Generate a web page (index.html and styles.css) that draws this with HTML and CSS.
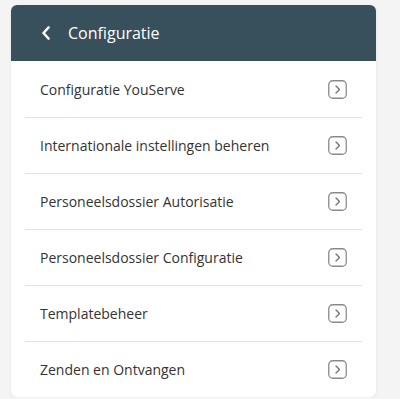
FILE: index.html
```html
<!DOCTYPE html>
<html lang="nl">
<head>
  <title>Configuratie</title>
  <meta charset="UTF-8">
  <link rel="stylesheet" href="styles.css">
</head>
<body>
<div class="card">
  <div class="card-header">
    <svg class="back" width="10" height="14" viewBox="0 0 10 14">
      <path d="M7.5 1.5 L2.5 7 L7.5 12.5" fill="none" stroke="#fff" stroke-width="2.6" stroke-linecap="round" stroke-linejoin="round"/>
    </svg>
    <span class="title">Configuratie</span>
  </div>
  <ul class="menu">
    <li class="menu-item"><span>Configuratie YouServe</span><svg class="go" width="19" height="19" viewBox="0 0 19 19"><rect x="0.75" y="0.75" width="17.5" height="17.5" rx="4" fill="none" stroke="#8a8a8a" stroke-width="1.3"/><path d="M8 6 L11.5 9.5 L8 13" fill="none" stroke="#6f6f6f" stroke-width="1.3" stroke-linecap="round" stroke-linejoin="round"/></svg></li>
    <li class="menu-item"><span>Internationale instellingen beheren</span><svg class="go" width="19" height="19" viewBox="0 0 19 19"><rect x="0.75" y="0.75" width="17.5" height="17.5" rx="4" fill="none" stroke="#8a8a8a" stroke-width="1.3"/><path d="M8 6 L11.5 9.5 L8 13" fill="none" stroke="#6f6f6f" stroke-width="1.3" stroke-linecap="round" stroke-linejoin="round"/></svg></li>
    <li class="menu-item"><span>Personeelsdossier Autorisatie</span><svg class="go" width="19" height="19" viewBox="0 0 19 19"><rect x="0.75" y="0.75" width="17.5" height="17.5" rx="4" fill="none" stroke="#8a8a8a" stroke-width="1.3"/><path d="M8 6 L11.5 9.5 L8 13" fill="none" stroke="#6f6f6f" stroke-width="1.3" stroke-linecap="round" stroke-linejoin="round"/></svg></li>
    <li class="menu-item"><span>Personeelsdossier Configuratie</span><svg class="go" width="19" height="19" viewBox="0 0 19 19"><rect x="0.75" y="0.75" width="17.5" height="17.5" rx="4" fill="none" stroke="#8a8a8a" stroke-width="1.3"/><path d="M8 6 L11.5 9.5 L8 13" fill="none" stroke="#6f6f6f" stroke-width="1.3" stroke-linecap="round" stroke-linejoin="round"/></svg></li>
    <li class="menu-item"><span>Templatebeheer</span><svg class="go" width="19" height="19" viewBox="0 0 19 19"><rect x="0.75" y="0.75" width="17.5" height="17.5" rx="4" fill="none" stroke="#8a8a8a" stroke-width="1.3"/><path d="M8 6 L11.5 9.5 L8 13" fill="none" stroke="#6f6f6f" stroke-width="1.3" stroke-linecap="round" stroke-linejoin="round"/></svg></li>
    <li class="menu-item"><span>Zenden en Ontvangen</span><svg class="go" width="19" height="19" viewBox="0 0 19 19"><rect x="0.75" y="0.75" width="17.5" height="17.5" rx="4" fill="none" stroke="#8a8a8a" stroke-width="1.3"/><path d="M8 6 L11.5 9.5 L8 13" fill="none" stroke="#6f6f6f" stroke-width="1.3" stroke-linecap="round" stroke-linejoin="round"/></svg></li>
  </ul>
</div>
</body>
</html>
```
FILE: styles.css
```css
body {
  margin: 0;
  padding: 5px 0 0 11px;
  background: #f4f4f4;
  font-family: "Open Sans", sans-serif;
}

.card {
  width: 365px;
  background: #fff;
  border-radius: 6px;
  box-shadow: 0 1px 3px rgba(0, 0, 0, 0.08);
  overflow: hidden;
}

.card-header {
  height: 56px;
  background: #384f5c;
  display: flex;
  align-items: center;
  padding-left: 30px;
  color: #fff;
}

.back {
  display: block;
  margin-right: 17px;
}

.title {
  font-size: 16px;
}

.menu {
  list-style: none;
  margin: 0;
  padding: 0 14px;
}

.menu-item {
  height: 56px;
  display: flex;
  align-items: center;
  justify-content: space-between;
  padding: 0 15px;
  font-size: 14px;
  color: #333;
  border-top: 1px solid #e3e3e3;
  box-sizing: border-box;
}

.menu-item:first-child {
  border-top: none;
}

.go {
  display: block;
}
```
